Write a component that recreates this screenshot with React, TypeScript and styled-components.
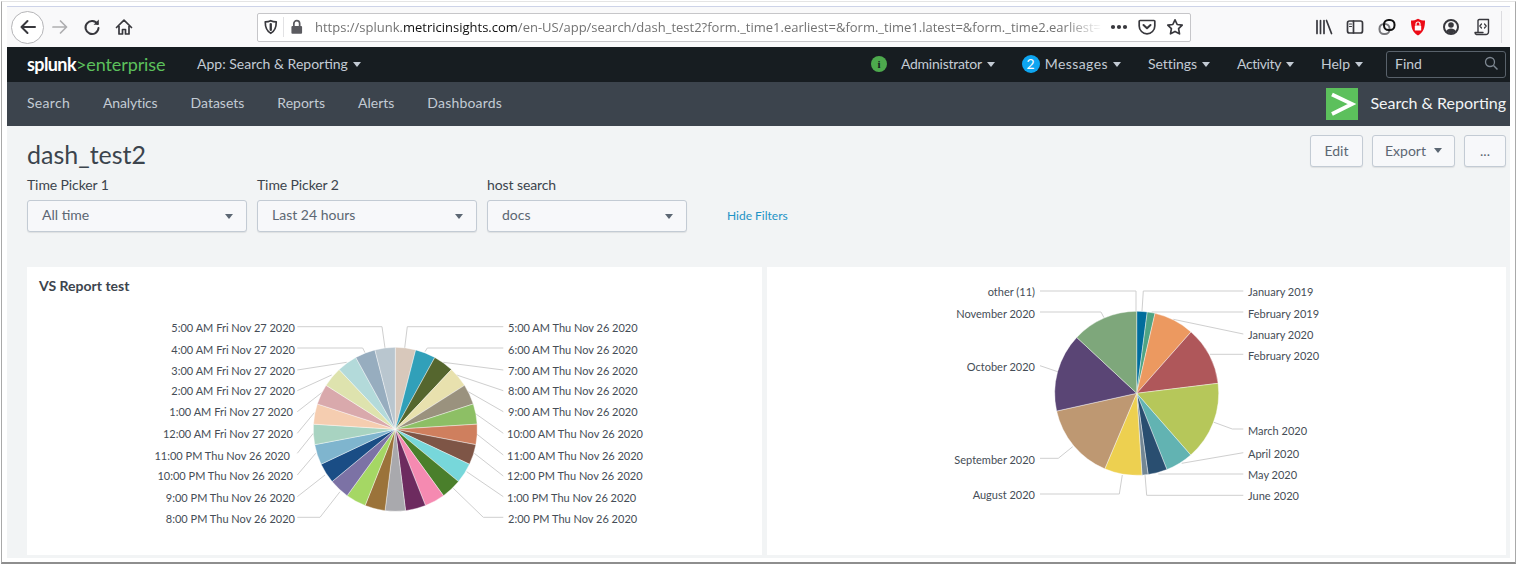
import React from "react";
import styled, { createGlobalStyle } from "styled-components";

const Global = createGlobalStyle`
  html, body { margin: 0; padding: 0; background: #fff; overflow: hidden; }
  * { box-sizing: border-box; }
  body { font-family: Lato, "Open Sans", sans-serif; }
`;

const Frame = styled.div`
  width: 1515px; height: 563px; margin: 1px 1px 0 1px;
  border: 1px solid #a9a9a9; border-top-color: #e4e4e4; border-bottom: 2px solid #8e8e8e;
  padding: 4px 5px 4px 5px; display: flex; flex-direction: column; background: #fff;
`;
const Toolbar = styled.div`
  height: 41px; flex: none; background: #f9f9fa; border-top: 1px solid #cdd3e8;
  display: flex; align-items: center; padding: 0 8px 0 4px; color: #38383d; position: relative;
`;
const BackCircle = styled.div`
  width: 33px; height: 33px; border-radius: 50%; border: 1px solid #b5b5b8; background: #fff;
  display: flex; align-items: center; justify-content: center; flex: none;
`;
const ToolIcon = styled.div<{ $ml?: number }>`
  width: 20px; height: 20px; flex: none; margin-left: ${p => p.$ml ?? 0}px;
  display: flex; align-items: center; justify-content: center;
`;
const UrlBar = styled.div`
  margin-left: 123px; width: 934px; height: 29px; flex: none; background: #fff;
  border: 1px solid #c6c6c9; border-radius: 2px; display: flex; align-items: center; padding: 0 5px 0 5px;
`;
const UrlDivider = styled.div`width: 1px; height: 20px; background: #e2e2e4; margin: 0 5px 0 4px; flex: none;`;
const UrlText = styled.div`
  width: 787px; margin-left: 11px; font: 13px/20px "Open Sans", sans-serif; color: #737373; white-space: nowrap; overflow: hidden; flex: none;
  -webkit-mask-image: linear-gradient(to right, #000 95%, transparent 100%);
  mask-image: linear-gradient(to right, #000 95%, transparent 100%);
  b { font-weight: 400; color: #111; }
`;
const ToolDivider = styled.div`width: 1px; height: 32px; background: #dcdce0; margin-left: 9px; flex: none;`;

const TopNav = styled.div`
  height: 35px; flex: none; background: #171d21; display: flex; align-items: center; padding: 0 4px 0 20px;
  font-size: 14px; color: #c3cbd4;
`;
const Logo = styled.div`
  font: 400 18px/24px Lato, sans-serif; color: #5cc05c; letter-spacing: -0.1px; width: 170px; flex: none; margin-bottom: 2px;
  b { color: #fff; font-weight: 700; letter-spacing: -0.6px; }
`;
const NavMenu = styled.div<{ $ls?: number }>`
  display: flex; align-items: center; gap: 5px; white-space: nowrap; margin-bottom: 2px; letter-spacing: ${p => p.$ls ?? 0}px;
`;
const Caret = styled.span<{ $color?: string }>`
  display: inline-block; width: 0; height: 0; border-left: 4px solid transparent; border-right: 4px solid transparent;
  border-top: 5px solid ${p => p.$color ?? "#c3cbd4"}; flex: none; margin-top: 1px;
`;
const NavRight = styled.div`margin-left: auto; display: flex; align-items: center; gap: 27px;`;
const StatusIcon = styled.span`
  width: 16px; height: 16px; border-radius: 50%; background: #4da94d; color: #171d21; font: 700 11px/16px "Liberation Serif", serif;
  text-align: center; margin-right: 9px; flex: none;
`;
const Badge = styled.span`
  width: 18px; height: 18px; border-radius: 50%; background: #0ea5f0; color: #fff; font-size: 14px; line-height: 18px; text-align: center; flex: none;
`;
const FindBox = styled.div`
  width: 120px; height: 27px; border: 1px solid #59626b; border-radius: 3px; margin-left: -4px;
  display: flex; align-items: center; justify-content: space-between; padding: 0 6px 2px 8px; color: #c3cbd4; font-size: 14px;
`;
const AppBar = styled.div`
  height: 44px; flex: none; background: #3c444d; display: flex; align-items: center; padding: 0 4px 0 20px; gap: 33px;
  font-size: 14px; color: #c3cbd4;
`;
const AppLink = styled.span<{ $ls?: number }>`margin-bottom: 4px; letter-spacing: ${p => p.$ls ?? 0}px;`;
const AppTitle = styled.div`
  margin-left: auto; display: flex; align-items: center; gap: 12px; color: #f2f4f5; font-size: 16px; white-space: nowrap;
`;
const AppName = styled.span`margin-bottom: 4px;`;
const AppLogo = styled.div`width: 32px; height: 32px; background: #5cc05c; flex: none;`;

const Content = styled.div`
  flex: 1; background: #f2f4f5; padding: 9px 4px 3px 20px; display: flex; flex-direction: column; min-height: 0;
`;
const HeaderRow = styled.div`display: flex; justify-content: space-between; align-items: flex-start; height: 42px;`;
const Title = styled.h1`
  margin: 3px 0 0; font: 400 25px/32px Lato, sans-serif; color: #3c444d;
`;
const Actions = styled.div`display: flex; gap: 9px;`;
const Btn = styled.button<{ $w: number }>`
  width: ${p => p.$w}px; height: 32px; border: 1px solid #c3cbd4; border-radius: 3px; background: #f7f8fa;
  box-shadow: 0 1px 1px rgba(0,0,0,.08);
  font: 14px Lato, sans-serif; color: #5c6773; display: flex; align-items: center; justify-content: center; gap: 8px; padding: 0 0 2px;
`;
const Filters = styled.div`display: flex; gap: 10px; align-items: flex-end;`;
const Field = styled.div<{ $w: number }>`width: ${p => p.$w}px; flex: none;`;
const FieldLabel = styled.div`font-size: 14px; line-height: 17px; color: #3c444d; margin: -1px 0 7px; letter-spacing: -0.1px;`;
const Select = styled.div`
  height: 32px; border: 1px solid #c3cbd4; border-radius: 3px; background: #f7f8fa; box-shadow: 0 1px 1px rgba(0,0,0,.08);
  display: flex; align-items: center; justify-content: space-between; padding: 0 13px 0 14px; font-size: 14px; color: #5c6773;
`;
const SelectValue = styled.span`margin-bottom: 3px;`;
const HideLink = styled.a`
  margin: 0 0 9px 30px; font-size: 12px; line-height: 14px; color: #1e93c6; white-space: nowrap;
`;
const Panels = styled.div`
  margin-top: 35px; height: 288px; display: grid; grid-template-columns: 735px 739px; gap: 5px; flex: none;
`;
const Panel = styled.div`background: #fff; display: flex; flex-direction: column; min-width: 0; overflow: hidden;`;
const PanelTitle = styled.div`
  font-size: 14px; font-weight: 700; color: #3c444d; line-height: 18px; padding: 10px 12px 0; height: 28px; flex: none;
`;
const Chart = styled.svg`
  display: block; flex: 1; min-height: 0; width: 100%;
  font-family: Lato, sans-serif; font-size: 11px;
  text { fill: #454d56; }
  polyline { fill: none; stroke: #cfcfcf; stroke-width: 1; }
`;

const polar = (cx: number, cy: number, r: number, deg: number) => {
  const a = ((deg - 90) * Math.PI) / 180;
  return [cx + r * Math.cos(a), cy + r * Math.sin(a)];
};

const Pie: React.FC<{ cx: number; cy: number; r: number; slices: { end: number; color: string }[] }> = ({ cx, cy, r, slices }) => {
  let start = 0;
  return (
    <g>
      {slices.map(s => {
        const [x1, y1] = polar(cx, cy, r, start);
        const [x2, y2] = polar(cx, cy, r, s.end);
        const large = s.end - start > 180 ? 1 : 0;
        const d = `M${cx} ${cy}L${x1} ${y1}A${r} ${r} 0 ${large} 1 ${x2} ${y2}Z`;
        start = s.end;
        return <path key={s.color} d={d} fill={s.color} stroke="#fff" strokeWidth="0.4" />;
      })}
    </g>
  );
};

const leftColors = ["#d8c8bb","#31a0b9","#55662e","#e8e1ae","#9a927e","#8dbf65","#cf7f5e","#7e5546","#77d7da","#4a7f2b","#f58ab1","#6d2b5f","#a9a9ad","#9b733a","#a5d764","#7c72a5","#1a4d85","#7fb5ce","#a8d3c1","#f5cdb0","#d9a9ac","#dee3ae","#b3dada","#97adbf","#b9c6cf"];
const leftSlices = leftColors.map((color, i) => ({ color, end: (i + 1) * 14.4 }));

const rightSlices = [
  { end: 7.4, color: "#006d9c" }, { end: 12.9, color: "#4fa484" }, { end: 41.5, color: "#ec9960" },
  { end: 83, color: "#af575a" }, { end: 138.8, color: "#b6c75a" }, { end: 158.4, color: "#62b3b2" },
  { end: 172, color: "#294e70" }, { end: 176.3, color: "#738795" }, { end: 202.9, color: "#edd050" },
  { end: 257.5, color: "#be9872" }, { end: 313, color: "#5a4575" }, { end: 360, color: "#7ea77b" },
];

type L = { t: string; x: number; y: number; a?: "end"; p: string };
const lz = (x: number, y: number) => `${(x / 3 + 290).toFixed(1)},${(y / 3 + 320).toFixed(1)}`;
const rz = (x: number, y: number) => `${(x / 3 + 1030).toFixed(1)},${(y / 3 + 285).toFixed(1)}`;
const lp = (...v: number[][]) => v.map(([x, y]) => lz(x, y)).join(" ");
const rp = (...v: number[][]) => v.map(([x, y]) => rz(x, y)).join(" ");

const leftLabels: L[] = [
  { t: "5:00 AM Thu Nov 26 2020", x: 508, y: 332, p: lp([344,84],[352,20],[640,20]) },
  { t: "6:00 AM Thu Nov 26 2020", x: 508, y: 354, p: lp([405,95],[412,84],[640,84]) },
  { t: "7:00 AM Thu Nov 26 2020", x: 508, y: 375, p: lp([460,127],[640,150]) },
  { t: "8:00 AM Thu Nov 26 2020", x: 508, y: 395, p: lp([500,165],[640,212]) },
  { t: "9:00 AM Thu Nov 26 2020", x: 508, y: 416, p: lp([535,215],[640,275]) },
  { t: "10:00 AM Thu Nov 26 2020", x: 507, y: 438, p: lp([555,280],[640,340]) },
  { t: "11:00 AM Thu Nov 26 2020", x: 507, y: 460, p: lp([560,342],[640,405]) },
  { t: "12:00 PM Thu Nov 26 2020", x: 507, y: 480, p: lp([553,400],[640,468]) },
  { t: "1:00 PM Thu Nov 26 2020", x: 507, y: 502, p: lp([530,455],[640,530]) },
  { t: "2:00 PM Thu Nov 26 2020", x: 508, y: 523, p: lp([490,505],[580,592],[640,592]) },
  { t: "5:00 AM Fri Nov 27 2020", x: 295, y: 332, a: "end", p: lp([285,84],[276,20],[22,20]) },
  { t: "4:00 AM Fri Nov 27 2020", x: 295, y: 354, a: "end", p: lp([225,98],[218,84],[22,84]) },
  { t: "3:00 AM Fri Nov 27 2020", x: 295, y: 375, a: "end", p: lp([170,127],[22,150]) },
  { t: "2:00 AM Fri Nov 27 2020", x: 295, y: 395, a: "end", p: lp([125,165],[22,212]) },
  { t: "1:00 AM Fri Nov 27 2020", x: 293, y: 416, a: "end", p: lp([95,218],[22,275]) },
  { t: "12:00 AM Fri Nov 27 2020", x: 293, y: 438, a: "end", p: lp([73,278],[22,340]) },
  { t: "11:00 PM Thu Nov 26 2020", x: 290, y: 460, a: "end", p: lp([70,340],[22,400]) },
  { t: "10:00 PM Thu Nov 26 2020", x: 293, y: 480, a: "end", p: lp([77,400],[22,465]) },
  { t: "9:00 PM Thu Nov 26 2020", x: 295, y: 502, a: "end", p: lp([105,465],[22,530]) },
  { t: "8:00 PM Thu Nov 26 2020", x: 295, y: 523, a: "end", p: lp([150,515],[90,592],[22,592]) },
];

const rightLabels: L[] = [
  { t: "January 2019", x: 1248, y: 296, p: rp([336,78],[340,18],[640,18]) },
  { t: "February 2019", x: 1248, y: 318, p: rp([365,81],[640,81]) },
  { t: "January 2020", x: 1248, y: 339, p: rp([430,103],[640,147]) },
  { t: "February 2020", x: 1248, y: 360, p: rp([540,208],[640,208]) },
  { t: "March 2020", x: 1248, y: 435, p: rp([552,412],[607,432],[640,432]) },
  { t: "April 2020", x: 1248, y: 458, p: rp([455,535],[640,503]) },
  { t: "May 2020", x: 1248, y: 479, p: rp([385,567],[640,567]) },
  { t: "June 2020", x: 1248, y: 500, p: rp([345,570],[350,631],[640,631]) },
  { t: "other (11)", x: 1035, y: 296, a: "end", p: rp([318,78],[318,18],[30,18]) },
  { t: "November 2020", x: 1035, y: 318, a: "end", p: rp([222,98],[213,81],[30,81]) },
  { t: "October 2020", x: 1035, y: 371, a: "end", p: rp([83,260],[30,242]) },
  { t: "September 2020", x: 1035, y: 464, a: "end", p: rp([128,485],[85,520],[30,520]) },
  { t: "August 2020", x: 1035, y: 499, a: "end", p: rp([277,570],[268,627],[30,627]) },
];

const Labels: React.FC<{ items: L[] }> = ({ items }) => (
  <g>
    {items.map(l => <polyline key={l.t + "-line"} points={l.p} />)}
    {items.map(l => <text key={l.t} x={l.x} y={l.y} textAnchor={l.a ?? "start"}>{l.t}</text>)}
  </g>
);

const S = { fill: "none", stroke: "#38383d", strokeWidth: 1.7, strokeLinecap: "round" as const, strokeLinejoin: "round" as const };

export default function App() {
  return (
    <>
      <Global />
      <Frame>
        <Toolbar>
          <BackCircle>
            <svg width="18" height="18" viewBox="0 0 18 18"><path d="M16 9H2.5M8.5 3L2.5 9l6 6" {...S} strokeWidth={2} /></svg>
          </BackCircle>
          <ToolIcon $ml={6}>
            <svg width="18" height="18" viewBox="0 0 18 18"><path d="M2 9h13.5M9.5 3l6 6-6 6" {...S} stroke="#aeaeb0" /></svg>
          </ToolIcon>
          <ToolIcon $ml={12}>
            <svg width="18" height="18" viewBox="0 0 18 18"><path d="M14.5 6A6.5 6.5 0 1 0 15.5 10" {...S} strokeWidth={2} /><path d="M15.8 1.5v5.2h-5.2z" fill="#38383d" /></svg>
          </ToolIcon>
          <ToolIcon $ml={12}>
            <svg width="18" height="18" viewBox="0 0 18 18"><path d="M1.5 9.5L9 2.2l7.500 7.300M4 8v8h3.500v-4.500h3V16H14V8" {...S} /></svg>
          </ToolIcon>
          <UrlBar>
            <svg width="16" height="16" viewBox="0 0 16 16"><path d="M8 1.500c2 1 4 1.200 5.700 1.200 0 5.500-1.200 9.600-5.700 11.800C3.500 12.300 2.300 8.200 2.300 2.700 4 2.700 6 2.500 8 1.500z" {...S} /><path d="M8 5v6" {...S} strokeWidth={2.4} /></svg>
            <UrlDivider />
            <svg width="16" height="16" viewBox="0 0 16 16"><rect x="2.500" y="7" width="11" height="8" rx="1" fill="#5b5b60" /><path d="M5 7V4.500a3 3 0 0 1 6 0V7" fill="none" stroke="#5b5b60" strokeWidth="1.8" /></svg>
            <UrlText>https://splunk.<b>metricinsights.com</b>/en-US/app/search/dash_test2?form._time1.earliest=&amp;form._time1.latest=&amp;form._time2.earliest=</UrlText>
            <ToolIcon $ml={7}>
              <svg width="18" height="6" viewBox="0 0 18 6"><circle cx="3" cy="3" r="2.1" fill="#38383d" /><circle cx="9" cy="3" r="2.1" fill="#38383d" /><circle cx="15" cy="3" r="2.1" fill="#38383d" /></svg>
            </ToolIcon>
            <ToolIcon $ml={8}>
              <svg width="18" height="18" viewBox="0 0 18 18"><path d="M2 2.500h14a.8.8 0 0 1 .8.8V8A7.800 7.800 0 0 1 1.200 8V3.300A.8.8 0 0 1 2 2.500z" {...S} /><path d="M5.500 7L9 10.300 12.500 7" {...S} strokeWidth={2} /></svg>
            </ToolIcon>
            <ToolIcon $ml={8}>
              <svg width="18" height="18" viewBox="0 0 18 18"><path d="M9 1.800l2.200 4.700 5 .7-3.600 3.500.9 5.100L9 13.400l-4.500 2.400.9-5.100L1.800 7.200l5-.7z" {...S} /></svg>
            </ToolIcon>
          </UrlBar>
          <ToolIcon $ml={123}>
            <svg width="18" height="18" viewBox="0 0 18 18"><path d="M2 2.500v13M5.500 2.500v13M9 2.500v13M11.500 2.500l5 13" {...S} /></svg>
          </ToolIcon>
          <ToolIcon $ml={11}>
            <svg width="18" height="18" viewBox="0 0 18 18"><rect x="1.500" y="3" width="15" height="12" rx="2" {...S} /><path d="M7.500 3v12" {...S} /><path d="M3.500 6h2M3.500 8.500h2" {...S} strokeWidth={1.2} /></svg>
          </ToolIcon>
          <ToolIcon $ml={12}>
            <svg width="18" height="18" viewBox="0 0 18 18"><rect x="1.500" y="6" width="10" height="10" rx="4.500" fill="none" stroke="#77777b" strokeWidth="2" /><rect x="6" y="2" width="10.500" height="10" rx="4.500" fill="none" stroke="#111" strokeWidth="2" /></svg>
          </ToolIcon>
          <ToolIcon $ml={11}>
            <svg width="18" height="18" viewBox="0 0 18 18"><path d="M9 .8c2.200 1.300 4.500 1.800 7 1.800 0 7-1.500 12-7 14.800C3.500 14.600 2 9.600 2 2.600c2.500 0 4.800-.5 7-1.800z" fill="#ec0b16" /><rect x="5.800" y="7.500" width="6.400" height="5" rx=".6" fill="#fff" /><path d="M7 7.500V6a2 2 0 0 1 4 0v1.500" fill="none" stroke="#fff" strokeWidth="1.2" /></svg>
          </ToolIcon>
          <ToolIcon $ml={13}>
            <svg width="18" height="18" viewBox="0 0 18 18"><circle cx="9" cy="9" r="7" {...S} strokeWidth={2} /><circle cx="9" cy="7" r="2.800" fill="#38383d" /><path d="M4 13.500c1-2.200 3-3 5-3s4 .8 5 3L9 16z" fill="#38383d" /></svg>
          </ToolIcon>
          <ToolIcon $ml={11}>
            <svg width="18" height="18" viewBox="0 0 18 18"><path d="M5 14V2.500A1.300 1.300 0 0 1 6.300 1.500H15.500V14a2.500 2.500 0 0 1-2.500 2.500H3.500A2 2 0 0 1 2 14.500h8" {...S} strokeWidth={1.4} /><path d="M8.500 6L6.800 8l1.700 2M11.500 6l1.700 2-1.700 2" {...S} strokeWidth={1.2} /></svg>
          </ToolIcon>
          <ToolDivider />
        </Toolbar>

        <TopNav>
          <Logo><b>splunk</b><span>&gt;enterprise</span></Logo>
          <NavMenu>App: Search &amp; Reporting <Caret /></NavMenu>
          <NavRight>
            <NavMenu $ls={-0.25}><StatusIcon>i</StatusIcon>Administrator <Caret /></NavMenu>
            <NavMenu $ls={0.4}><Badge>2</Badge>Messages <Caret /></NavMenu>
            <NavMenu $ls={-0.05}>Settings <Caret /></NavMenu>
            <NavMenu $ls={-0.4}>Activity <Caret /></NavMenu>
            <NavMenu>Help <Caret /></NavMenu>
            <FindBox>Find
              <svg width="15" height="15" viewBox="0 0 15 15"><circle cx="6" cy="6" r="4.500" fill="none" stroke="#7d8791" strokeWidth="1.3" /><path d="M9.500 9.500L13.500 13.500" stroke="#7d8791" strokeWidth="1.5" /></svg>
            </FindBox>
          </NavRight>
        </TopNav>

        <AppBar>
          <AppLink $ls={0.3}>Search</AppLink><AppLink $ls={-0.15}>Analytics</AppLink><AppLink>Datasets</AppLink><AppLink>Reports</AppLink><AppLink>Alerts</AppLink><AppLink $ls={0.2}>Dashboards</AppLink>
          <AppTitle>
            <AppLogo>
              <svg width="32" height="32" viewBox="0 0 32 32"><path d="M6 6.500L26 16 6 26" fill="none" stroke="#fff" strokeWidth="3.8" /></svg>
            </AppLogo>
            <AppName>Search &amp; Reporting</AppName>
          </AppTitle>
        </AppBar>

        <Content>
          <HeaderRow>
            <Title>dash_test2</Title>
            <Actions>
              <Btn $w={53}>Edit</Btn>
              <Btn $w={83}>Export <Caret $color="#5c6773" /></Btn>
              <Btn $w={42}>...</Btn>
            </Actions>
          </HeaderRow>
          <Filters>
            <Field $w={220}><FieldLabel>Time Picker 1</FieldLabel><Select><SelectValue>All time</SelectValue> <Caret $color="#5c6773" /></Select></Field>
            <Field $w={220}><FieldLabel>Time Picker 2</FieldLabel><Select><SelectValue>Last 24 hours</SelectValue> <Caret $color="#5c6773" /></Select></Field>
            <Field $w={200}><FieldLabel>host search</FieldLabel><Select><SelectValue>docs</SelectValue> <Caret $color="#5c6773" /></Select></Field>
            <HideLink>Hide Filters</HideLink>
          </Filters>
          <Panels>
            <Panel>
              <PanelTitle>VS Report test</PanelTitle>
              <Chart viewBox="27 295 735 260">
                <Labels items={leftLabels} />
                <Pie cx={395.3} cy={429.3} r={82} slices={leftSlices} />
              </Chart>
            </Panel>
            <Panel>
              <Chart viewBox="767 267 739 288">
                <Labels items={rightLabels} />
                <Pie cx={1136.7} cy={393.3} r={82} slices={rightSlices} />
              </Chart>
            </Panel>
          </Panels>
        </Content>
      </Frame>
    </>
  );
}
